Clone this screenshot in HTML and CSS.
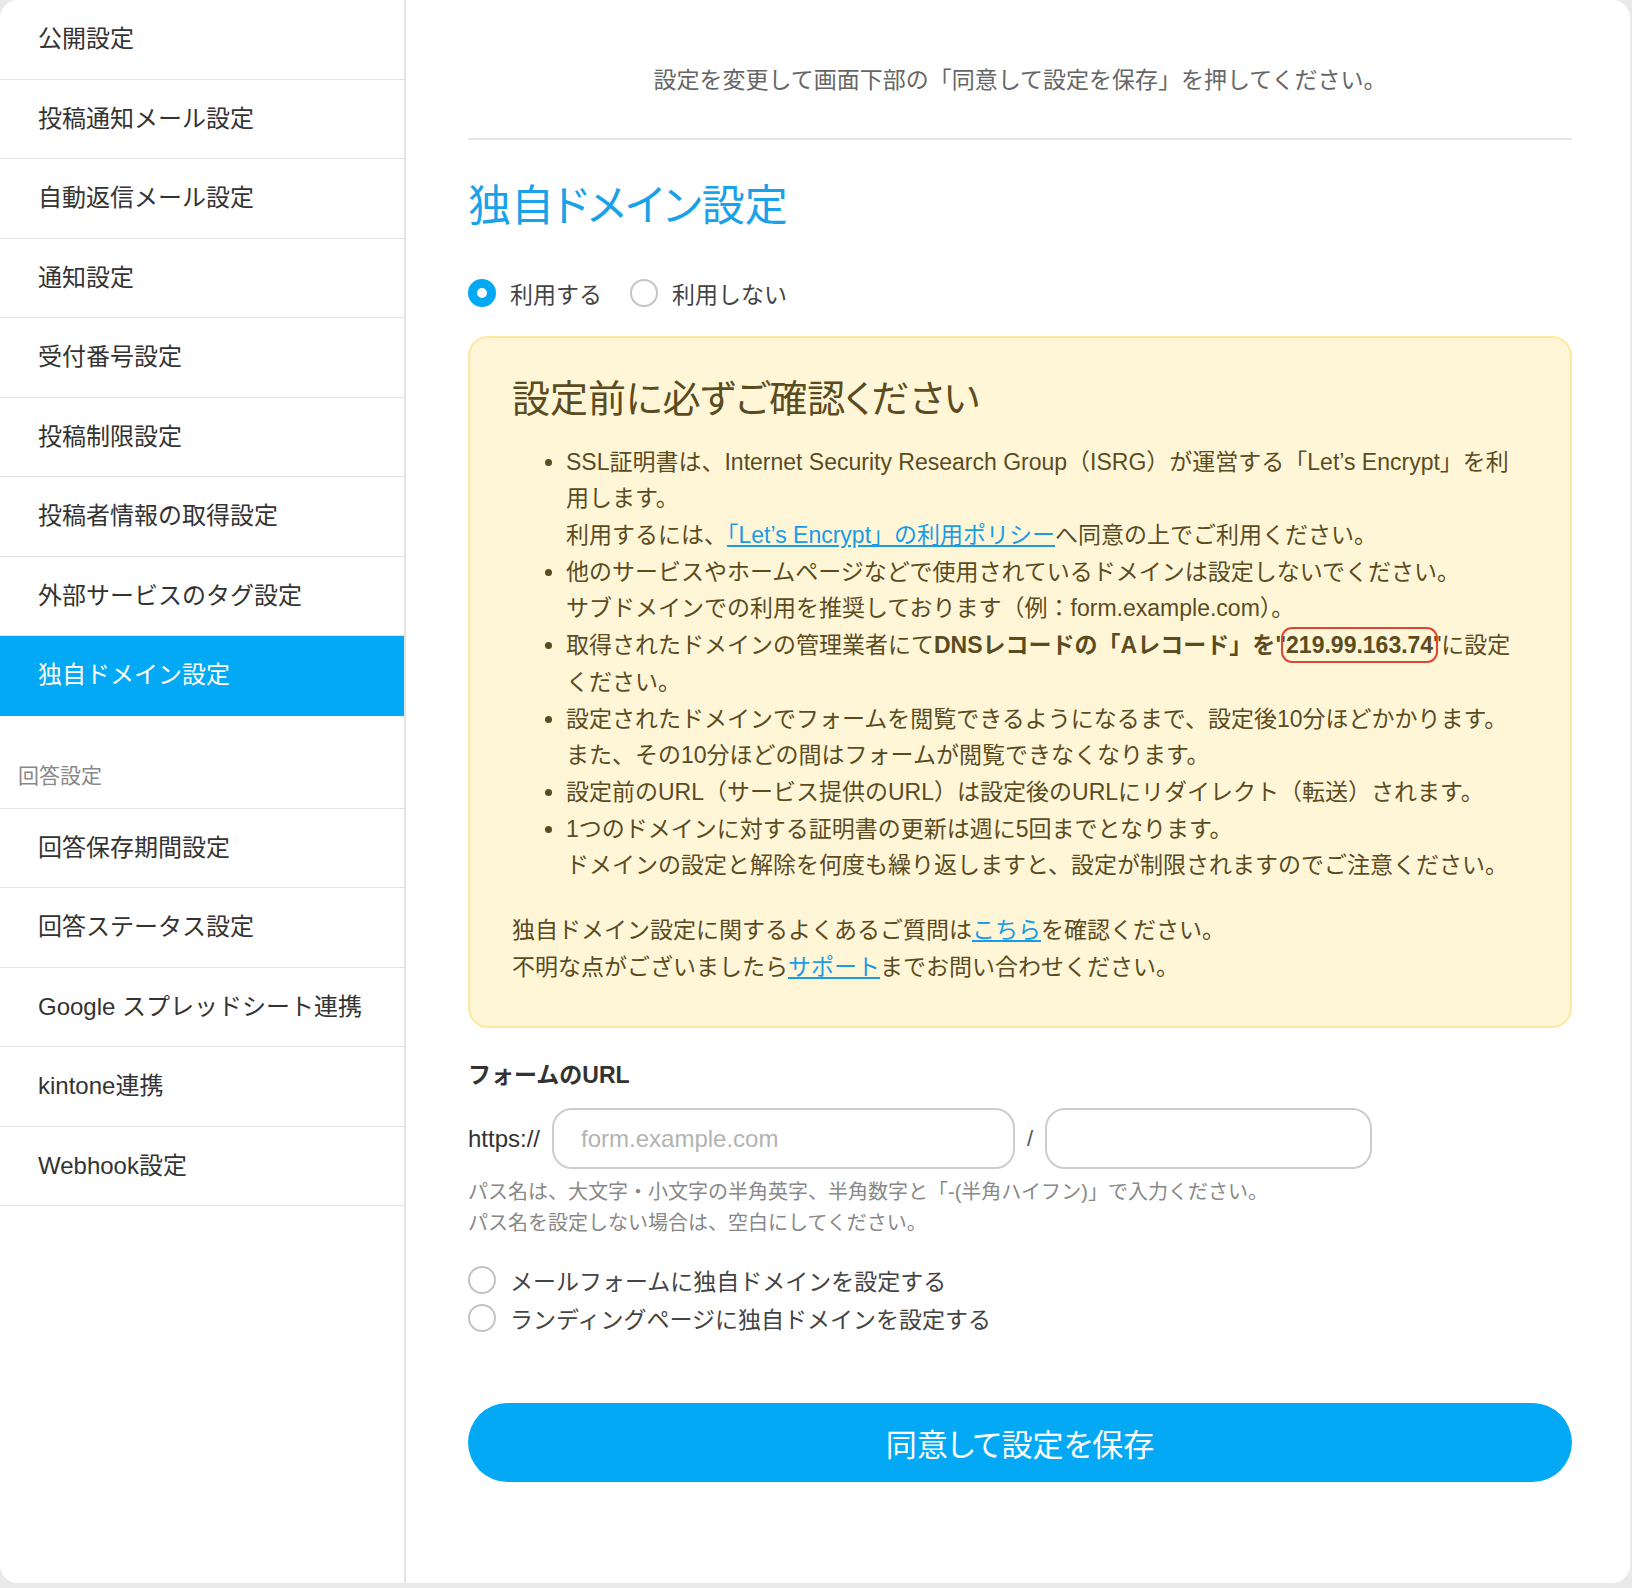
FILE: index.html
```html
<!DOCTYPE html>
<html lang="ja">
<head>
  <meta charset="UTF-8">
  <title>独自ドメイン設定</title>
  <link rel="stylesheet" href="styles.css">
</head>
<body>
  <div class="app">
    <!-- 左メニュー -->
    <nav class="side">
      <ul class="menu">
        <li><a href="#">公開設定</a></li>
        <li><a href="#">投稿通知メール設定</a></li>
        <li><a href="#">自動返信メール設定</a></li>
        <li><a href="#">通知設定</a></li>
        <li><a href="#">受付番号設定</a></li>
        <li><a href="#">投稿制限設定</a></li>
        <li><a href="#">投稿者情報の取得設定</a></li>
        <li><a href="#">外部サービスのタグ設定</a></li>
        <li><a href="#" class="active">独自ドメイン設定</a></li>
      </ul>
      <div class="menu-head">回答設定</div>
      <ul class="menu">
        <li><a href="#">回答保存期間設定</a></li>
        <li><a href="#">回答ステータス設定</a></li>
        <li><a href="#">Google スプレッドシート連携</a></li>
        <li><a href="#">kintone連携</a></li>
        <li><a href="#">Webhook設定</a></li>
      </ul>
    </nav>

    <!-- 本文 -->
    <main class="main">
      <p class="lead">設定を変更して画面下部の「同意して設定を保存」を押してください。</p>

      <h1 class="title">独自ドメイン設定</h1>

      <div class="choice">
        <label class="opt"><span class="radio on"></span>利用する</label>
        <label class="opt"><span class="radio"></span>利用しない</label>
      </div>

      <section class="notice">
        <h2>設定前に必ずご確認ください</h2>
        <ul>
          <li>SSL証明書は、Internet Security Research Group（ISRG）が運営する「Let’s Encrypt」を利用します。<br>利用するには、<a href="#">「Let’s Encrypt」の利用ポリシー</a>へ同意の上でご利用ください。</li>
          <li>他のサービスやホームページなどで使用されているドメインは設定しないでください。<br>サブドメインでの利用を推奨しております（例：form.example.com）。</li>
          <li>取得されたドメインの管理業者にて<strong>DNSレコードの「Aレコード」を"<span class="ip">219.99.163.74</span></strong>"に設定ください。</li>
          <li>設定されたドメインでフォームを閲覧できるようになるまで、設定後10分ほどかかります。<br>また、その10分ほどの間はフォームが閲覧できなくなります。</li>
          <li>設定前のURL（サービス提供のURL）は設定後のURLにリダイレクト（転送）されます。</li>
          <li>1つのドメインに対する証明書の更新は週に5回までとなります。<br>ドメインの設定と解除を何度も繰り返しますと、設定が制限されますのでご注意ください。</li>
        </ul>
        <p>独自ドメイン設定に関するよくあるご質問は<a href="#">こちら</a>を確認ください。<br>不明な点がございましたら<a href="#">サポート</a>までお問い合わせください。</p>
      </section>

      <div class="field">
        <div class="field-label">フォームのURL</div>
        <div class="url-row">
          <span class="scheme">https://</span>
          <input type="text" class="input host" placeholder="form.example.com">
          <span class="slash">/</span>
          <input type="text" class="input path">
        </div>
        <p class="help">パス名は、大文字・小文字の半角英字、半角数字と「-(半角ハイフン)」で入力ください。<br>パス名を設定しない場合は、空白にしてください。</p>
        <div class="targets">
          <label class="opt"><span class="radio"></span>メールフォームに独自ドメインを設定する</label>
          <label class="opt"><span class="radio"></span>ランディングページに独自ドメインを設定する</label>
        </div>
      </div>

      <button class="save">同意して設定を保存</button>
    </main>
  </div>
</body>
</html>
```

FILE: styles.css
```css
/* 全体 */
* {
  box-sizing: border-box;
}

body {
  margin: 0;
  background: #e9e9e9;
  font-family: "Liberation Sans", "Noto Sans CJK JP", sans-serif;
  color: #333;
}

.app {
  width: 1630px;
  height: 1583px;
  background: #fff;
  border-radius: 18px;
  overflow: hidden;
  display: flex;
}

/* 左メニュー */
.side {
  width: 406px;
  flex-shrink: 0;
  border-right: 2px solid #e4e4e4;
}

.menu {
  list-style: none;
  margin: 0;
  padding: 0;
}

.menu a {
  display: block;
  height: 79.5px;
  line-height: 78.5px;
  padding-left: 38px;
  font-size: 24px;
  color: #333;
  text-decoration: none;
  border-bottom: 1px solid #e4e4e4;
  white-space: nowrap;
}

.menu a.active {
  background: #03a9f4;
  color: #fff;
  border-bottom-color: #03a9f4;
}

.menu-head {
  padding: 45px 0 17px 18px;
  font-size: 21px;
  line-height: 30px;
  color: #888;
  border-bottom: 1px solid #e4e4e4;
}

/* 本文 */
.main {
  flex: 1;
  padding: 0 58px 0 62px;
}

.lead {
  margin: 0;
  padding: 64px 0 42px;
  border-bottom: 2px solid #e6e6e6;
  text-align: center;
  font-size: 23px;
  line-height: 32px;
  color: #666;
}

.title {
  margin: 38px 0 0;
  font-size: 43px;
  line-height: 56px;
  font-weight: 400;
  font-feature-settings: "palt";
  color: #1aa2e8;
}

.choice {
  display: flex;
  align-items: center;
  margin-top: 44px;
  height: 30px;
}

.choice .opt {
  margin-right: 28px;
}

.opt {
  display: flex;
  align-items: center;
  gap: 14px;
  font-size: 23px;
  color: #444;
}

.radio {
  width: 28px;
  height: 28px;
  border-radius: 50%;
  border: 2px solid #c4c4c4;
  background: #fff;
  flex-shrink: 0;
}

.radio.on {
  border: 9px solid #03a9f4;
}

/* 注意ボックス */
.notice {
  margin-top: 28px;
  background: #fff6d8;
  border: 2px solid #fde8a2;
  border-radius: 20px;
  padding: 36px 42px 41px;
  color: #5b4c1f;
}

.notice h2 {
  margin: 0;
  font-size: 38px;
  line-height: 50px;
  font-weight: 400;
  font-feature-settings: "palt";
}

.notice ul {
  margin: 19.6px 0 0;
  padding: 0 13px 0 54px;
  font-size: 23px;
  line-height: 36.7px;
}

.notice p {
  margin: 28px 0 0;
  font-size: 23px;
  line-height: 36.7px;
}

.notice a {
  color: #1a9be6;
}

.notice strong {
  font-weight: 700;
}

.ip {
  border-radius: 6px;
  outline: 2px solid #dc4637;
  outline-offset: 3px;
}

/* フォームURL */
.field-label {
  margin-top: 32px;
  font-size: 23px;
  line-height: 30px;
  font-weight: 700;
  color: #333;
}

.url-row {
  display: flex;
  align-items: center;
  gap: 12px;
  margin-top: 18px;
}

.scheme {
  font-size: 24px;
  color: #333;
}

.slash {
  font-size: 22px;
  color: #555;
}

.input {
  height: 61px;
  border: 2px solid #cdcdcd;
  border-radius: 20px;
  padding: 0 27px;
  font-family: inherit;
  font-size: 24px;
  color: #333;
  background: #fff;
}

.input::placeholder {
  color: #b3b3b3;
}

.host {
  width: 463px;
}

.path {
  width: 327px;
}

.help {
  margin: 7.5px 0 0;
  font-size: 20px;
  line-height: 31px;
  color: #888;
}

.targets {
  margin-top: 22.5px;
}

.targets .opt {
  height: 38px;
}

/* 保存ボタン */
.save {
  display: block;
  width: 100%;
  height: 79px;
  margin-top: 66px;
  border: none;
  border-radius: 40px;
  background: #03a9f4;
  color: #fff;
  font-family: inherit;
  font-size: 31px;
  font-feature-settings: "palt";
  cursor: pointer;
}
```
